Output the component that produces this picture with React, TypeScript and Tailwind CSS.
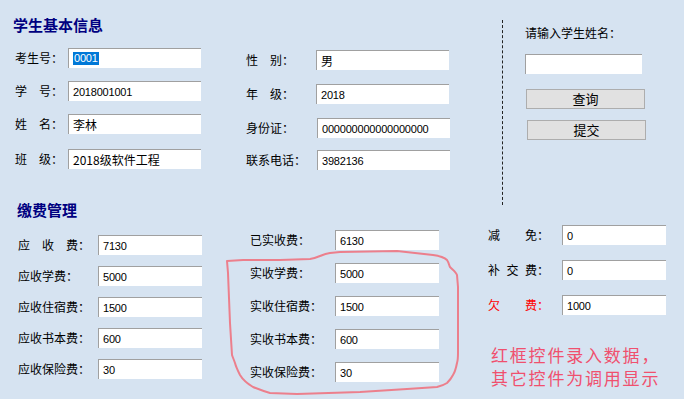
import React from "react";

const Input = ({ value, w, cjk, sel }: { value?: string; w: string; cjk?: boolean; sel?: boolean }) => (
  <div
    className={`${w} h-[20px] shrink-0 bg-white border-t border-l border-[#a0a0a0] flex items-center pl-[4px] overflow-hidden whitespace-nowrap ${
      cjk ? "text-[12px] font-['Noto_Sans_CJK_SC',sans-serif]" : "text-[11px] tracking-[-0.2px] font-['Liberation_Sans','Noto_Sans_CJK_SC',sans-serif]"
    }`}
  >
    {sel ? <span className="bg-[#0078d7] text-white leading-[13px] pl-[1px] pr-[1px]">0001</span> : value}
  </div>
);

const Lbl = ({ parts, w, red }: { parts: string[]; w: string; red?: boolean }) =>
  parts.length === 1 ? (
    <span className={red ? "text-[#ff0000]" : ""}>{parts[0]}</span>
  ) : (
    <span className={`flex justify-between ${w} ${red ? "text-[#ff0000]" : ""}`}>
      {parts.map((p, i) => (
        <span key={i}>{p}</span>
      ))}
    </span>
  );

export default function App() {
  return (
    <div className="w-[684px] h-[399px] bg-[#d6e3f1] relative overflow-hidden font-['Noto_Sans_CJK_SC',sans-serif] text-[12px] leading-[14px] text-black">
      {/* Top section */}
      <div className="flex h-[202px]">
        <div className="pl-[13px] pt-[17px] w-[201px] shrink-0">
          <div className="text-[15px] leading-[15px] font-bold text-[#000080]">学生基本信息</div>
          <div className="flex flex-col">
            <div className="mt-[16px] flex items-center h-[20px]">
              <div className="w-[55px] pl-[2px] shrink-0"><Lbl parts={["考生号："]} w="" /></div>
              <Input w="w-[133px]" sel />
            </div>
            <div className="mt-[13px] flex items-center h-[20px]">
              <div className="w-[55px] pl-[2px] shrink-0"><Lbl parts={["学", "号："]} w="w-[48px]" /></div>
              <Input w="w-[133px]" value="2018001001" />
            </div>
            <div className="mt-[13px] flex items-center h-[20px]">
              <div className="w-[55px] pl-[2px] shrink-0"><Lbl parts={["姓", "名："]} w="w-[48px]" /></div>
              <Input w="w-[133px]" value="李林" cjk />
            </div>
            <div className="mt-[15px] flex items-center h-[20px]">
              <div className="w-[55px] pl-[2px] shrink-0"><Lbl parts={["班", "级："]} w="w-[48px]" /></div>
              <Input w="w-[133px]" value="2018级软件工程" cjk />
            </div>
          </div>
        </div>

        <div className="ml-[45px] pt-[50px] shrink-0 flex flex-col">
          <div className="flex items-center h-[20px]">
            <div className="w-[70px] shrink-0"><Lbl parts={["性", "别："]} w="w-[48px]" /></div>
            <Input w="w-[133px]" value="男" cjk />
          </div>
          <div className="mt-[14px] flex items-center h-[20px]">
            <div className="w-[70px] shrink-0"><Lbl parts={["年", "级："]} w="w-[48px]" /></div>
            <Input w="w-[133px]" value="2018" />
          </div>
          <div className="mt-[14px] flex items-center h-[20px]">
            <div className="w-[71px] shrink-0"><Lbl parts={["身份证："]} w="" /></div>
            <Input w="w-[133px]" value="000000000000000000" />
          </div>
          <div className="mt-[12px] flex items-center h-[20px]">
            <div className="w-[71px] shrink-0"><Lbl parts={["联系电话："]} w="" /></div>
            <Input w="w-[133px]" value="3982136" />
          </div>
        </div>

        <div className="ml-[52px] mt-[20px] h-[185px] w-0 border-l border-dashed border-[#222] shrink-0" />

        <div className="ml-[22px] pt-[25px] flex flex-col items-start shrink-0">
          <div className="leading-[16px]">请输入学生姓名：</div>
          <div className="mt-[13px]">
            <Input w="w-[117px]" value="" />
          </div>
          <button className="mt-[15px] ml-[1px] w-[119px] h-[20px] bg-[#e1e1e1] border border-[#adadad] flex items-center justify-center text-[13px] leading-[14px]">
            查询
          </button>
          <button className="mt-[11px] ml-[2px] w-[119px] h-[20px] bg-[#e1e1e1] border border-[#adadad] flex items-center justify-center text-[13px] leading-[14px]">
            提交
          </button>
        </div>
      </div>

      {/* Bottom section */}
      <div className="flex pl-[17px]">
        <div className="w-[185px] shrink-0 flex flex-col">
          <div className="text-[15px] leading-[15px] font-bold text-[#000080]">缴费管理</div>
          <div className="mt-[18px] flex items-center h-[20px]">
            <div className="w-[81px] pl-[1px] shrink-0"><Lbl parts={["应", "收", "费："]} w="w-[72px]" /></div>
            <Input w="w-[104px]" value="7130" />
          </div>
          <div className="mt-[11px] flex items-center h-[20px]">
            <div className="w-[81px] pl-[1px] shrink-0"><Lbl parts={["应收学费："]} w="" /></div>
            <Input w="w-[104px]" value="5000" />
          </div>
          <div className="mt-[11px] flex items-center h-[20px]">
            <div className="w-[81px] pl-[1px] shrink-0"><Lbl parts={["应收住宿费："]} w="" /></div>
            <Input w="w-[104px]" value="1500" />
          </div>
          <div className="mt-[11px] flex items-center h-[20px]">
            <div className="w-[81px] pl-[1px] shrink-0"><Lbl parts={["应收书本费："]} w="" /></div>
            <Input w="w-[104px]" value="600" />
          </div>
          <div className="mt-[11px] flex items-center h-[20px]">
            <div className="w-[81px] pl-[1px] shrink-0"><Lbl parts={["应收保险费："]} w="" /></div>
            <Input w="w-[104px]" value="30" />
          </div>
        </div>

        <div className="ml-[48px] w-[189px] pt-[28px] shrink-0 flex flex-col">
          <div className="flex items-center h-[20px]">
            <div className="w-[85px] shrink-0">已实收费：</div>
            <Input w="w-[104px]" value="6130" />
          </div>
          <div className="mt-[13px] flex items-center h-[20px]">
            <div className="w-[85px] shrink-0">实收学费：</div>
            <Input w="w-[104px]" value="5000" />
          </div>
          <div className="mt-[13px] flex items-center h-[20px]">
            <div className="w-[85px] shrink-0">实收住宿费：</div>
            <Input w="w-[104px]" value="1500" />
          </div>
          <div className="mt-[13px] flex items-center h-[20px]">
            <div className="w-[85px] shrink-0">实收书本费：</div>
            <Input w="w-[104px]" value="600" />
          </div>
          <div className="mt-[13px] flex items-center h-[20px]">
            <div className="w-[85px] shrink-0">实收保险费：</div>
            <Input w="w-[104px]" value="30" />
          </div>
        </div>

        <div className="ml-[49px] pt-[23px] shrink-0 flex flex-col">
          <div className="flex items-center h-[20px]">
            <div className="w-[74px] shrink-0"><Lbl parts={["减", "免："]} w="w-[61px]" /></div>
            <Input w="w-[104px]" value="0" />
          </div>
          <div className="mt-[15px] flex items-center h-[20px]">
            <div className="w-[74px] shrink-0"><Lbl parts={["补", "交", "费："]} w="w-[61px]" /></div>
            <Input w="w-[104px]" value="0" />
          </div>
          <div className="mt-[15px] flex items-center h-[20px]">
            <div className="w-[74px] shrink-0"><Lbl parts={["欠", "费："]} w="w-[61px]" red /></div>
            <Input w="w-[104px]" value="1000" />
          </div>
          <div className="mt-[28px] pl-[3px] text-[17px] leading-[23px] tracking-[1.8px] text-[#f0506e] whitespace-nowrap">
            <div className="h-[23px]">红框控件录入数据，</div>
            <div className="h-[23px]">其它控件为调用显示</div>
          </div>
        </div>
      </div>

      {/* Hand-drawn red outline */}
      <svg className="absolute left-0 top-0 pointer-events-none" width="684" height="399" viewBox="0 0 684 399">
        <path
          d="M227,261 L243,260 L280,260 L310,259 C318,258 322,254 330,253 L340,252 L397,251 L433,255 C440,256 445,258 447,260 C449,263 449,265 450,267 C453,270 456,272 457,275 L458,287 L458,353 C458,357 458,360 457,363 C456,368 455,372 453,375 C451,379 449,381 447,383 C444,385 441,386 437,387 L407,389 L360,392 L297,394 L270,393 C263,391 258,389 253,387 C248,384 243,380 240,375 C238,371 236,367 235,363 C234,360 233,358 232,355 L230,323 L228,273 Z"
          fill="none"
          stroke="#ec7f8c"
          strokeWidth="2"
          strokeLinejoin="round"
        />
      </svg>
    </div>
  );
}
